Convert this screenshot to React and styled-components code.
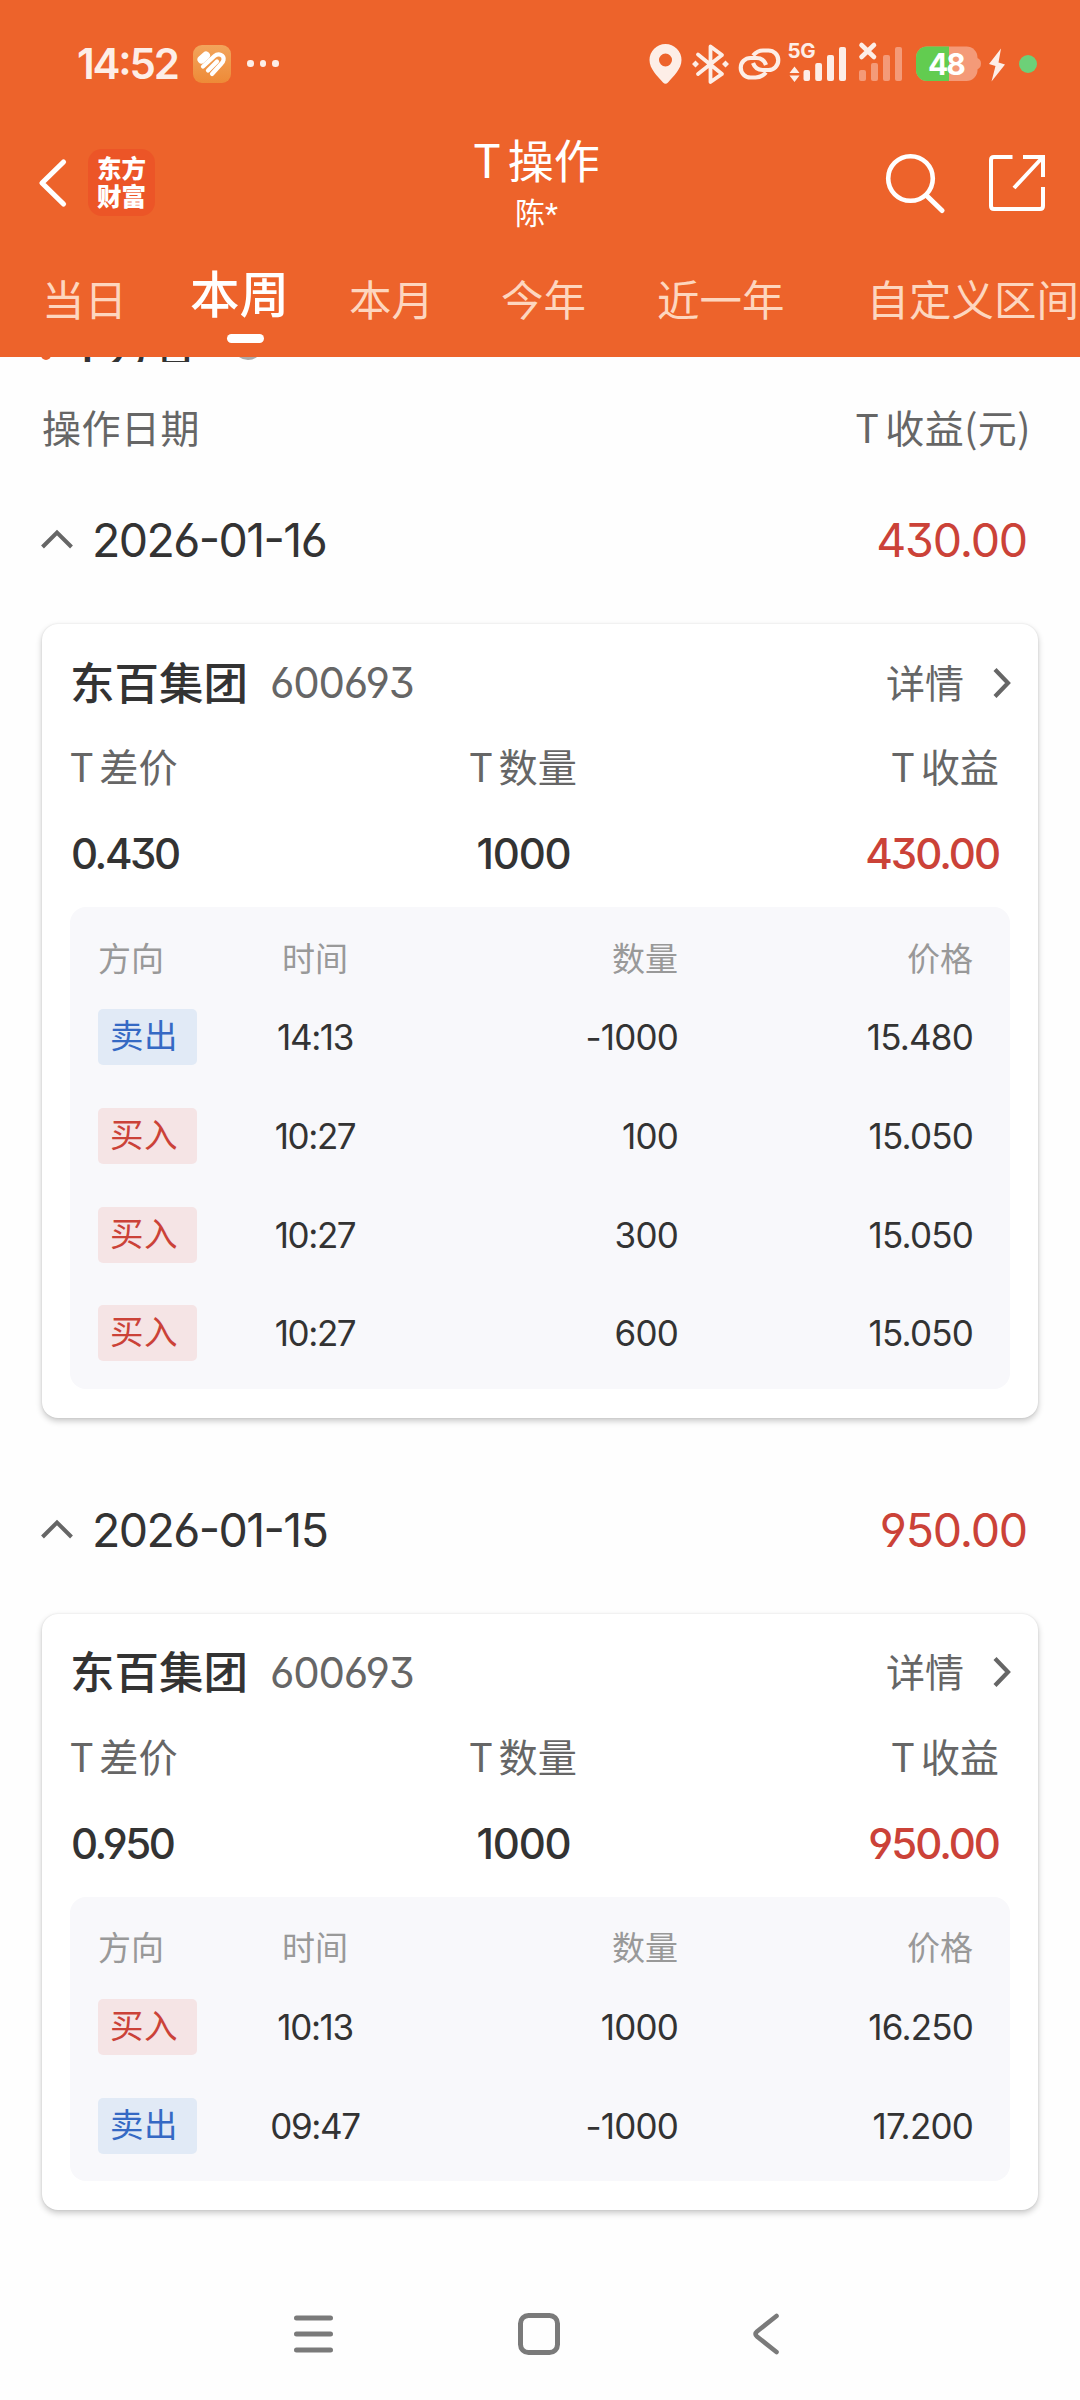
import React from "react";
import styled, { createGlobalStyle } from "styled-components";

const tabs = [
  { name: "当日", gap: 42 },
  { name: "本周", gap: 63, active: true },
  { name: "本月", gap: 60 },
  { name: "今年", gap: 67 },
  { name: "近一年", gap: 71 },
  { name: "自定义区间", gap: 82 },
];

const days = [
  {
    date: "2026-01-16",
    profit: "430.00",
    name: "东百集团",
    code: "600693",
    spread: "0.430",
    amount: "1000",
    trades: [
      { side: "sell", time: "14:13", amount: "-1000", price: "15.480" },
      { side: "buy", time: "10:27", amount: "100", price: "15.050" },
      { side: "buy", time: "10:27", amount: "300", price: "15.050" },
      { side: "buy", time: "10:27", amount: "600", price: "15.050" },
    ],
  },
  {
    date: "2026-01-15",
    profit: "950.00",
    name: "东百集团",
    code: "600693",
    spread: "0.950",
    amount: "1000",
    trades: [
      { side: "buy", time: "10:13", amount: "1000", price: "16.250" },
      { side: "sell", time: "09:47", amount: "-1000", price: "17.200" },
    ],
  },
];

function StatusIcons() {
  return (
    <svg width="410" height="50" viewBox="645 38 410 50" fill="#fdeee7">
      {/* location */}
      <path
        fillRule="evenodd"
        d="M665.5 43a16 16 0 0 0-16 16c0 9 8 16 13.500 22.500q2.500 2.500 5 0C673.500 75 681.500 68 681.500 59a16 16 0 0 0-16-16zm0 9.500a6.500 6.500 0 1 1 0 13 6.500 6.500 0 0 1 0-13z"
      />
      {/* bluetooth */}
      <path
        d="M698 53.500l24 19.500-11.500 8V45.500L722 54l-24 19"
        fill="none"
        stroke="#fdeee7"
        strokeWidth="3.800"
        strokeLinejoin="round"
        strokeLinecap="round"
      />
      <path d="M695.500 59.500l3.500 3.500-3.500 3.500-3.500-3.500zM725.500 59.500l3.500 3.500-3.500 3.500-3.500-3.500z" />
      {/* link */}
      <g fill="none" stroke="#fdeee7" strokeWidth="4.200">
        <path d="M753 54.500c3-3.500 6-5 10-5h5.500a9.500 9.500 0 0 1 0 19.500h-6c-5 0-8-3-9.500-7" />
        <path d="M766 71.500c-3 3.500-6 5-10.500 5h-5a9.500 9.500 0 0 1 0-19.500h6c5 0 8 3 9.500 7" />
      </g>
      {/* data arrows */}
      <path d="M794.500 65.500l5 6.500h-10zM794.500 81l5-6.500h-10z" />
      <rect x="803.500" y="69" width="6.500" height="11" rx="2" />
      <rect x="815.200" y="62" width="6.800" height="18" rx="2" />
      <rect x="827" y="54" width="7" height="26" rx="2" />
      <rect x="839" y="46" width="7" height="34" rx="2" />
      {/* second sim, no service */}
      <path
        d="M861.500 44l12.500 12M874 44l-12.500 12"
        stroke="#fdeee7"
        strokeWidth="4.600"
        strokeLinecap="round"
      />
      <g fill="#f49a78">
        <rect x="859" y="69" width="7" height="11" rx="2" />
        <rect x="871" y="62" width="7" height="18" rx="2" />
        <rect x="883" y="54" width="7" height="26" rx="2" />
        <rect x="895" y="46" width="7" height="34" rx="2" />
      </g>
      {/* battery */}
      <rect x="916" y="45.500" width="61.500" height="34.500" rx="11" fill="#f49a78" />
      <path d="M977 57q4 1 4 5.500t-4 6z" fill="#f49a78" />
      <path d="M949 45.500h-22a11 11 0 0 0-11 11v12.500a11 11 0 0 0 11 11h22z" fill="#62cc50" />
      {/* charging */}
      <path d="M1001 47.500l-12 15.500 6.500 2-4 15.500 13.500-17-6.500-2z" />
      <circle cx="1028" cy="63" r="9" fill="#6dd078" />
      <text x="787.500" y="56.500" fontSize="20.500" fontWeight="700" letterSpacing="-0.3">
        5G
      </text>
      <text x="928" y="74" fontSize="30" fontWeight="700" fill="#fff" letterSpacing="-2">
        48
      </text>
    </svg>
  );
}

function HealthIcon() {
  return (
    <svg width="38" height="38" viewBox="0 0 38 38">
      <defs>
        <linearGradient id="health" x1="0" y1="0" x2="0" y2="1">
          <stop offset="0" stopColor="#f2a55c" />
          <stop offset="1" stopColor="#ee8a37" />
        </linearGradient>
      </defs>
      <rect width="38" height="38" rx="9" fill="url(#health)" />
      <g fill="none" stroke="#fff" strokeWidth="4.200" strokeLinecap="round">
        <path d="M8.500 14.500l4.500-4" strokeWidth="8" />
        <path d="M10 21.500L21.500 11c4-3.500 10-1 9 4-.3 1.500-1 2.500-2 3.500L19 29" />
        <path d="M15 25.500l9-9" />
      </g>
    </svg>
  );
}

function Label({ children }) {
  return (
    <>
      <Tee>T</Tee>
      {children}
    </>
  );
}

function DaySection({ day }) {
  return (
    <Section>
      <DateRow>
        <svg width="34" height="26" viewBox="0 0 34 26">
          <path d="M1.500 20L16 5.500 30.500 20" fill="none" stroke="#666" strokeWidth="4" />
        </svg>
        <DateText>{day.date}</DateText>
        <DayProfit>{day.profit}</DayProfit>
      </DateRow>
      <Card>
        <CardHead>
          <StockName>{day.name}</StockName>
          <StockCode>{day.code}</StockCode>
          <Detail>
            <span>详情</span>
            <svg width="20" height="32" viewBox="0 0 20 32">
              <path d="M2 2.500L15 16 2 29.500" fill="none" stroke="#666" strokeWidth="4.200" />
            </svg>
          </Detail>
        </CardHead>
        <Summary>
          <SummaryLabel>
            <Label>差价</Label>
          </SummaryLabel>
          <SummaryLabel>
            <Label>数量</Label>
          </SummaryLabel>
          <SummaryLabel>
            <Label>收益</Label>
          </SummaryLabel>
          <SummaryValue $spacing={-2.4}>{day.spread}</SummaryValue>
          <SummaryValue $spacing={-1.2}>{day.amount}</SummaryValue>
          <SummaryValue $spacing={-2} $red>
            {day.profit}
          </SummaryValue>
        </Summary>
        <Panel>
          <PanelHead>
            <span>方向</span>
            <span>时间</span>
            <span>数量</span>
            <span>价格</span>
          </PanelHead>
          {day.trades.map((trade, i) => (
            <TradeRow key={i}>
              <Badge $side={trade.side}>{trade.side === "buy" ? "买入" : "卖出"}</Badge>
              <span>{trade.time}</span>
              <TradeNumber>{trade.amount}</TradeNumber>
              <TradeNumber>{trade.price}</TradeNumber>
            </TradeRow>
          ))}
        </Panel>
      </Card>
    </Section>
  );
}

function App() {
  return (
    <Page>
      <GlobalStyle />
      <Header>
        <StatusBar>
          <Clock>14:52</Clock>
          <HealthIcon />
          <Dots>
            <i />
            <i />
            <i />
          </Dots>
          <StatusIcons />
        </StatusBar>
        <TitleBar>
          <TitleSide>
            <svg width="32" height="54" viewBox="0 0 32 54">
              <path
                d="M26.500 5L5 26l21.500 21"
                fill="none"
                stroke="#fff"
                strokeWidth="5.200"
                strokeLinecap="round"
                strokeLinejoin="round"
              />
            </svg>
            <Logo>
              <span>东方</span>
              <span>财富</span>
            </Logo>
          </TitleSide>
          <TitleCenter>
            <Title>
              <Label>操作</Label>
            </Title>
            <SubTitle>
              陈<Mask>*</Mask>
            </SubTitle>
          </TitleCenter>
          <TitleSide $end>
            <svg width="64" height="64" viewBox="0 1 64 64" fill="none" stroke="#fff">
              <circle cx="29.500" cy="27.500" r="22.300" strokeWidth="4.600" />
              <path d="M46 45l15 14.500" strokeWidth="5" strokeLinecap="round" />
            </svg>
            <svg width="60" height="60" viewBox="0 1 60 60" fill="none" stroke="#fff" strokeWidth="4">
              <path d="M25.500 4H7q-3 0-3 3v46q0 3 3 3h46q3 0 3-3V34" />
              <path d="M36 4h20v20M55 5L27 35" />
            </svg>
          </TitleSide>
        </TitleBar>
        <TabBar>
          {tabs.map((tab) => (
            <Tab key={tab.name} $gap={tab.gap} $active={tab.active}>
              {tab.name}
            </Tab>
          ))}
        </TabBar>
      </Header>
      <ScrolledRow>
        <Marker />
        <ScrolledTitle>
          <Label>方名</Label>
        </ScrolledTitle>
        <HelpRing />
      </ScrolledRow>
      <ColumnHead>
        <span>操作日期</span>
        <span>
          <Label>收益(元)</Label>
        </span>
      </ColumnHead>
      {days.map((day) => (
        <DaySection key={day.date} day={day} />
      ))}
      <NavBar>
        <svg width="42" height="46" viewBox="0 0 42 46" stroke="#7a7a7a" strokeWidth="5" strokeLinecap="round">
          <path d="M4.500 7h34M4.500 23h34M4.500 39h34" />
        </svg>
        <svg width="46" height="46" viewBox="0 0 46 46">
          <rect x="4.500" y="4.500" width="37" height="37" rx="8" fill="none" stroke="#7a7a7a" strokeWidth="5" />
        </svg>
        <svg width="46" height="46" viewBox="-6 0 46 46">
          <path
            d="M26.500 5L7 20.500q-3 2.500 0 5L26.500 41"
            fill="none"
            stroke="#7a7a7a"
            strokeWidth="4.600"
            strokeLinecap="round"
          />
        </svg>
      </NavBar>
    </Page>
  );
}

const GlobalStyle = createGlobalStyle`
  * {
    box-sizing: border-box;
  }
  body {
    margin: 0;
    background: #fefefe;
    color: #333;
    font-family: "Inter", "Noto Sans CJK SC", sans-serif;
    font-feature-settings: "cv03", "cv04", "cv09", "case", "calt";
  }
  svg {
    display: block;
    flex: none;
  }
`;

const cjk = `"Noto Sans CJK SC", sans-serif`;

const Page = styled.div`
  display: flex;
  flex-direction: column;
  width: 1080px;
  height: 2400px;
  overflow: hidden;
`;

const Header = styled.header`
  height: 357px;
  flex: none;
  background: #ed632b;
  color: #fff;
`;

const StatusBar = styled.div`
  display: flex;
  align-items: center;
  height: 127px;
  padding: 0 25px 0 77px;
  > svg:last-child {
    margin-left: auto;
  }
`;

const Clock = styled.div`
  width: 116px;
  font-size: 42px;
  font-weight: 600;
  letter-spacing: -2.2px;
  color: #fdeee7;
`;

const Dots = styled.div`
  display: flex;
  gap: 6px;
  margin-left: 16px;
  i {
    width: 6.5px;
    height: 6.5px;
    border-radius: 50%;
    background: #fdeee7;
  }
`;

const TitleBar = styled.div`
  display: grid;
  grid-template-columns: 1fr auto 1fr;
  align-items: center;
  height: 114px;
  padding: 0 33px 0 37px;
`;

const TitleSide = styled.div`
  display: flex;
  align-items: center;
  gap: ${(props) => (props.$end ? "42px" : "19px")};
  justify-content: ${(props) => (props.$end ? "flex-end" : "flex-start")};
`;

const Logo = styled.div`
  display: flex;
  flex-direction: column;
  align-items: center;
  justify-content: center;
  width: 67px;
  height: 67px;
  margin-top: -3px;
  padding-bottom: 2px;
  border-radius: 14px;
  background: #ec5527;
  font: 900 24.5px/28px ${cjk};
`;

const TitleCenter = styled.div`
  display: flex;
  flex-direction: column;
  align-items: center;
  margin: -2px 11px 0 0;
`;

const Title = styled.div`
  font: 400 46px/54px ${cjk};
`;

const SubTitle = styled.div`
  padding-top: 2px;
  margin: 0 0 -2px;
  font: 400 30px/48px ${cjk};
`;

const Mask = styled.span`
  font-family: "Roboto", sans-serif;
`;

const Tee = styled.span`
  margin-right: 0.15em;
`;

const TabBar = styled.nav`
  display: flex;
  height: 116px;
  overflow: hidden;
`;

const Tab = styled.div`
  position: relative;
  flex: none;
  margin-left: ${(props) => props.$gap}px;
  white-space: nowrap;
  color: ${(props) => (props.$active ? "#fff" : "#fdd6bf")};
  font-family: ${cjk};
  font-size: ${(props) => (props.$active ? "49.5px" : "42.5px")};
  font-weight: ${(props) => (props.$active ? 500 : 400)};
  line-height: ${(props) => (props.$active ? "102px" : "114px")};
  &::after {
    content: "";
    display: ${(props) => (props.$active ? "block" : "none")};
    position: absolute;
    left: 37px;
    top: 93px;
    width: 37px;
    height: 9px;
    border-radius: 5px;
    background: #fff;
  }
`;

/* a title scrolled almost completely under the header */
const ScrolledRow = styled.div`
  display: flex;
  align-items: flex-end;
  flex: none;
  height: 5px;
  padding-left: 41px;
  overflow: hidden;
`;

const Marker = styled.div`
  width: 10px;
  height: 36px;
  margin-bottom: 2px;
  border-radius: 5px;
  background: #ed632b;
`;

const ScrolledTitle = styled.div`
  margin: 0 38px -12px 23px;
  font: 500 44px/60px ${cjk};
`;

const HelpRing = styled.div`
  width: 30px;
  height: 30px;
  margin-bottom: 2px;
  border: 3px solid #aaa;
  border-radius: 50%;
`;

const ColumnHead = styled.div`
  display: flex;
  justify-content: space-between;
  flex: none;
  height: 132px;
  padding: 0 49px 0 42px;
  color: #666;
  font: 400 39px/129px ${cjk};
  letter-spacing: 0.5px;
`;

const Section = styled.section`
  flex: none;
  margin-bottom: 66px;
`;

const DateRow = styled.div`
  display: flex;
  align-items: center;
  height: 92px;
  padding: 0 53px 0 41px;
  font-size: 46.5px;
  letter-spacing: -1.6px;
`;

const DateText = styled.div`
  margin-left: 17px;
`;

const DayProfit = styled.div`
  margin-left: auto;
  letter-spacing: -1.2px;
  color: #cb4238;
`;

const Card = styled.div`
  margin: 38px 42px 0;
  padding: 0 28px 29px;
  border-radius: 16px;
  background: #fff;
  box-shadow: 0 3px 6px rgba(0, 0, 0, 0.22), 0 0 2px rgba(0, 0, 0, 0.1);
`;

const CardHead = styled.div`
  display: flex;
  align-items: center;
  height: 117px;
`;

const StockName = styled.div`
  margin-top: -4px;
  font: 500 44.5px/60px ${cjk};
`;

const StockCode = styled.div`
  margin-left: 22px;
  color: #666;
  font-size: 42px;
  letter-spacing: -1.2px;
`;

const Detail = styled.div`
  display: flex;
  align-items: center;
  gap: 29px;
  margin-left: auto;
  margin-right: -3px;
  color: #666;
  font: 400 39px/60px ${cjk};
  span {
    margin-top: -4px;
  }
`;

const Summary = styled.div`
  display: grid;
  grid-template-columns: 300px 1fr 323px;
  grid-template-rows: 48px 118px;
  align-items: center;
  padding-right: 11px;
  > :nth-child(3n + 2) {
    text-align: center;
  }
  > :nth-child(3n) {
    text-align: right;
  }
`;

const SummaryLabel = styled.div`
  color: #666;
  font: 400 39.2px/48px ${cjk};
`;

const SummaryValue = styled.div`
  padding: 11px 0 0 1px;
  font-size: 42px;
  font-weight: 500;
  letter-spacing: ${(props) => props.$spacing}px;
  color: ${(props) => (props.$red ? "#cb4238" : "#333")};
`;

const Panel = styled.div`
  padding: 21px 37px 6px 28px;
  border-radius: 16px;
  background: #f8f8fb;
`;

const PanelHead = styled.div`
  display: grid;
  grid-template-columns: 150px 134px 1fr 295px;
  align-items: center;
  height: 60px;
  color: #999;
  font: 400 33px/58px ${cjk};
  > :nth-child(2) {
    text-align: center;
  }
  > :nth-child(n + 3) {
    text-align: right;
  }
  > span {
    margin-top: -3px;
  }
`;

const TradeRow = styled(PanelHead)`
  height: 98.7px;
  color: #333;
  font: 400 35px/60px "Inter", sans-serif;
  letter-spacing: -1.4px;
  > span {
    margin-top: 0;
  }
`;

const TradeNumber = styled.span`
  letter-spacing: -0.8px;
`;

const Badge = styled.div`
  width: 99px;
  height: 56px;
  padding-left: 12px;
  border-radius: 5px;
  letter-spacing: 0.5px;
  font: 400 33.5px/50px ${cjk};
  color: ${(props) => (props.$side === "buy" ? "#cb4238" : "#3569c4")};
  background: ${(props) => (props.$side === "buy" ? "#f5e4e5" : "#e1eaf6")};
`;

const NavBar = styled.nav`
  display: flex;
  align-items: center;
  height: 80px;
  margin-top: 18px;
  padding-left: 292px;
  gap: 182px;
`;

export default App;
